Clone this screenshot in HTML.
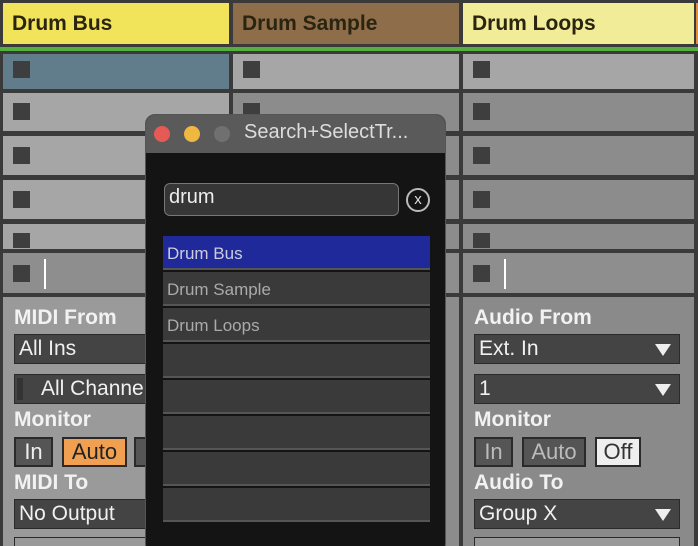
<!DOCTYPE html>
<html><head><style>
*{margin:0;padding:0;box-sizing:border-box}
html,body{width:698px;height:546px;overflow:hidden}
body{background:#3a3a3a;font-family:"Liberation Sans",sans-serif;position:relative}
.a{position:absolute}
.hd{top:3px;height:41px;font-size:21px;font-weight:bold;color:#2a2410;padding:9px 0 0 9px}
.sq{position:absolute;width:17px;height:17px;background:#3e3e3e}
.lbl{position:absolute;color:#f2f2f2;font-size:21px;font-weight:bold}
.box{position:absolute;background:#444;border:1px solid #2a2a2a;color:#f0f0f0;font-size:21px;padding:2px 4px;height:30px}
.tri{position:absolute;right:8px;top:9px;width:0;height:0;border-left:8px solid transparent;border-right:8px solid transparent;border-top:12px solid #eee}
.btn{position:absolute;top:437px;height:30px;border:2px solid #2a2a2a;background:#555;color:#bbb;font-size:22px;text-align:center;line-height:26px}
.row{position:absolute;left:163px;width:267px;height:34px;background:#3a3a3a;border-bottom:2px solid #555;color:#aaa;font-size:17px;padding:8px 0 0 4px}
</style></head><body>
<div class="a hd" style="left:3px;width:226px;background:#f2e45a">Drum Bus</div>
<div class="a hd" style="left:233px;width:226px;background:#8e6e4a">Drum Sample</div>
<div class="a hd" style="left:463px;width:231px;background:#f1ec98">Drum Loops</div>
<div class="a" style="left:696px;top:3px;width:2px;height:41px;background:#e09040"></div>
<div class="a" style="left:0;top:47px;width:698px;height:4px;background:#55b040"></div>
<div class="a" style="left:3px;top:54px;width:226px;height:35px;background:#617d8c"></div>
<div class="a" style="left:233px;top:54px;width:226px;height:35px;background:#a6a6a6"></div>
<div class="a" style="left:463px;top:54px;width:231px;height:35px;background:#a6a6a6"></div>
<div class="a" style="left:3px;top:93px;width:226px;height:38px;background:#a6a6a6"></div>
<div class="a" style="left:3px;top:136px;width:226px;height:39px;background:#a6a6a6"></div>
<div class="a" style="left:3px;top:180px;width:226px;height:39px;background:#a6a6a6"></div>
<div class="a" style="left:3px;top:224px;width:226px;height:25px;background:#a6a6a6"></div>
<div class="a" style="left:233px;top:93px;width:226px;height:38px;background:#8c8c8c"></div>
<div class="a" style="left:233px;top:136px;width:226px;height:39px;background:#8c8c8c"></div>
<div class="a" style="left:233px;top:180px;width:226px;height:39px;background:#8c8c8c"></div>
<div class="a" style="left:233px;top:224px;width:226px;height:25px;background:#8c8c8c"></div>
<div class="a" style="left:463px;top:93px;width:231px;height:38px;background:#8c8c8c"></div>
<div class="a" style="left:463px;top:136px;width:231px;height:39px;background:#8c8c8c"></div>
<div class="a" style="left:463px;top:180px;width:231px;height:39px;background:#8c8c8c"></div>
<div class="a" style="left:463px;top:224px;width:231px;height:25px;background:#8c8c8c"></div>
<div class="a" style="left:3px;top:253px;width:226px;height:40px;background:#8e8e8e"></div>
<div class="a" style="left:233px;top:253px;width:226px;height:40px;background:#8e8e8e"></div>
<div class="a" style="left:463px;top:253px;width:231px;height:40px;background:#8e8e8e"></div>
<div class="a" style="left:3px;top:297px;width:226px;height:249px;background:#9a9a9a"></div>
<div class="a" style="left:233px;top:297px;width:226px;height:249px;background:#8c8c8c"></div>
<div class="a" style="left:463px;top:297px;width:231px;height:249px;background:#8a8a8a"></div>
<div class="sq" style="left:13px;top:61px"></div><div class="sq" style="left:243px;top:61px"></div><div class="sq" style="left:473px;top:61px"></div>
<div class="sq" style="left:13px;top:103px"></div><div class="sq" style="left:243px;top:103px"></div><div class="sq" style="left:473px;top:103px"></div>
<div class="sq" style="left:13px;top:147px"></div><div class="sq" style="left:473px;top:147px"></div>
<div class="sq" style="left:13px;top:191px"></div><div class="sq" style="left:473px;top:191px"></div>
<div class="sq" style="left:13px;top:233px;height:15px"></div><div class="sq" style="left:473px;top:233px;height:15px"></div>
<div class="sq" style="left:13px;top:265px"></div><div class="sq" style="left:473px;top:265px"></div>
<div class="a" style="left:44px;top:259px;width:2px;height:30px;background:#fff"></div>
<div class="a" style="left:504px;top:259px;width:2px;height:30px;background:#fff"></div>
<div class="lbl" style="left:14px;top:306px">MIDI From</div>
<div class="box" style="left:14px;top:334px;width:200px">All Ins</div>
<div class="box" style="left:14px;top:374px;width:200px;padding-left:26px">All Channels</div>
<div class="a" style="left:17px;top:378px;width:6px;height:22px;background:#333"></div>
<div class="lbl" style="left:14px;top:408px">Monitor</div>
<div class="btn" style="left:14px;width:39px;color:#eee">In</div>
<div class="btn" style="left:62px;width:65px;background:#f0a050;color:#222">Auto</div>
<div class="btn" style="left:134px;width:40px">O</div>
<div class="lbl" style="left:14px;top:471px">MIDI To</div>
<div class="box" style="left:14px;top:499px;width:200px">No Output</div>
<div class="box" style="left:14px;top:537px;width:200px;background:#999"></div>
<div class="lbl" style="left:474px;top:306px">Audio From</div>
<div class="box" style="left:474px;top:334px;width:206px">Ext. In<div class="tri"></div></div>
<div class="box" style="left:474px;top:374px;width:206px">1<div class="tri"></div></div>
<div class="lbl" style="left:474px;top:408px">Monitor</div>
<div class="btn" style="left:474px;width:39px">In</div>
<div class="btn" style="left:522px;width:64px">Auto</div>
<div class="btn" style="left:595px;width:46px;background:#eee;color:#333">Off</div>
<div class="lbl" style="left:474px;top:471px">Audio To</div>
<div class="box" style="left:474px;top:499px;width:206px">Group X<div class="tri"></div></div>
<div class="box" style="left:474px;top:537px;width:206px;background:#999"></div>
<div class="a" style="left:145px;top:114px;width:301px;height:440px;background:#141414;border-radius:10px;border:1px solid #555;overflow:hidden">
 <div class="a" style="left:0;top:0;width:301px;height:38px;background:#5a5a5a"></div>
 <div class="a" style="left:8px;top:11px;width:16px;height:16px;border-radius:50%;background:#e55a55"></div>
 <div class="a" style="left:38px;top:11px;width:16px;height:16px;border-radius:50%;background:#f0b840"></div>
 <div class="a" style="left:68px;top:11px;width:16px;height:16px;border-radius:50%;background:#707070"></div>
 <div class="a" style="left:98px;top:6px;color:#ddd;font-size:20px">Search+SelectTr...</div>
 <div class="a" style="left:18px;top:68px;width:235px;height:33px;background:#363636;border:1px solid #777;border-radius:6px;color:#eee;font-size:20px;padding:2px 4px">drum</div>
 <div class="a" style="left:260px;top:73px;width:24px;height:24px;border-radius:50%;border:2px solid #bbb;color:#ddd;font-size:15px;text-align:center;line-height:20px">x</div>
</div>
<div class="row" style="top:236px;background:#20299a;color:#ccd">Drum Bus</div>
<div class="row" style="top:272px">Drum Sample</div>
<div class="row" style="top:308px">Drum Loops</div>
<div class="row" style="top:344px"></div>
<div class="row" style="top:380px"></div>
<div class="row" style="top:416px"></div>
<div class="row" style="top:452px"></div>
<div class="row" style="top:488px"></div>
</body></html>
